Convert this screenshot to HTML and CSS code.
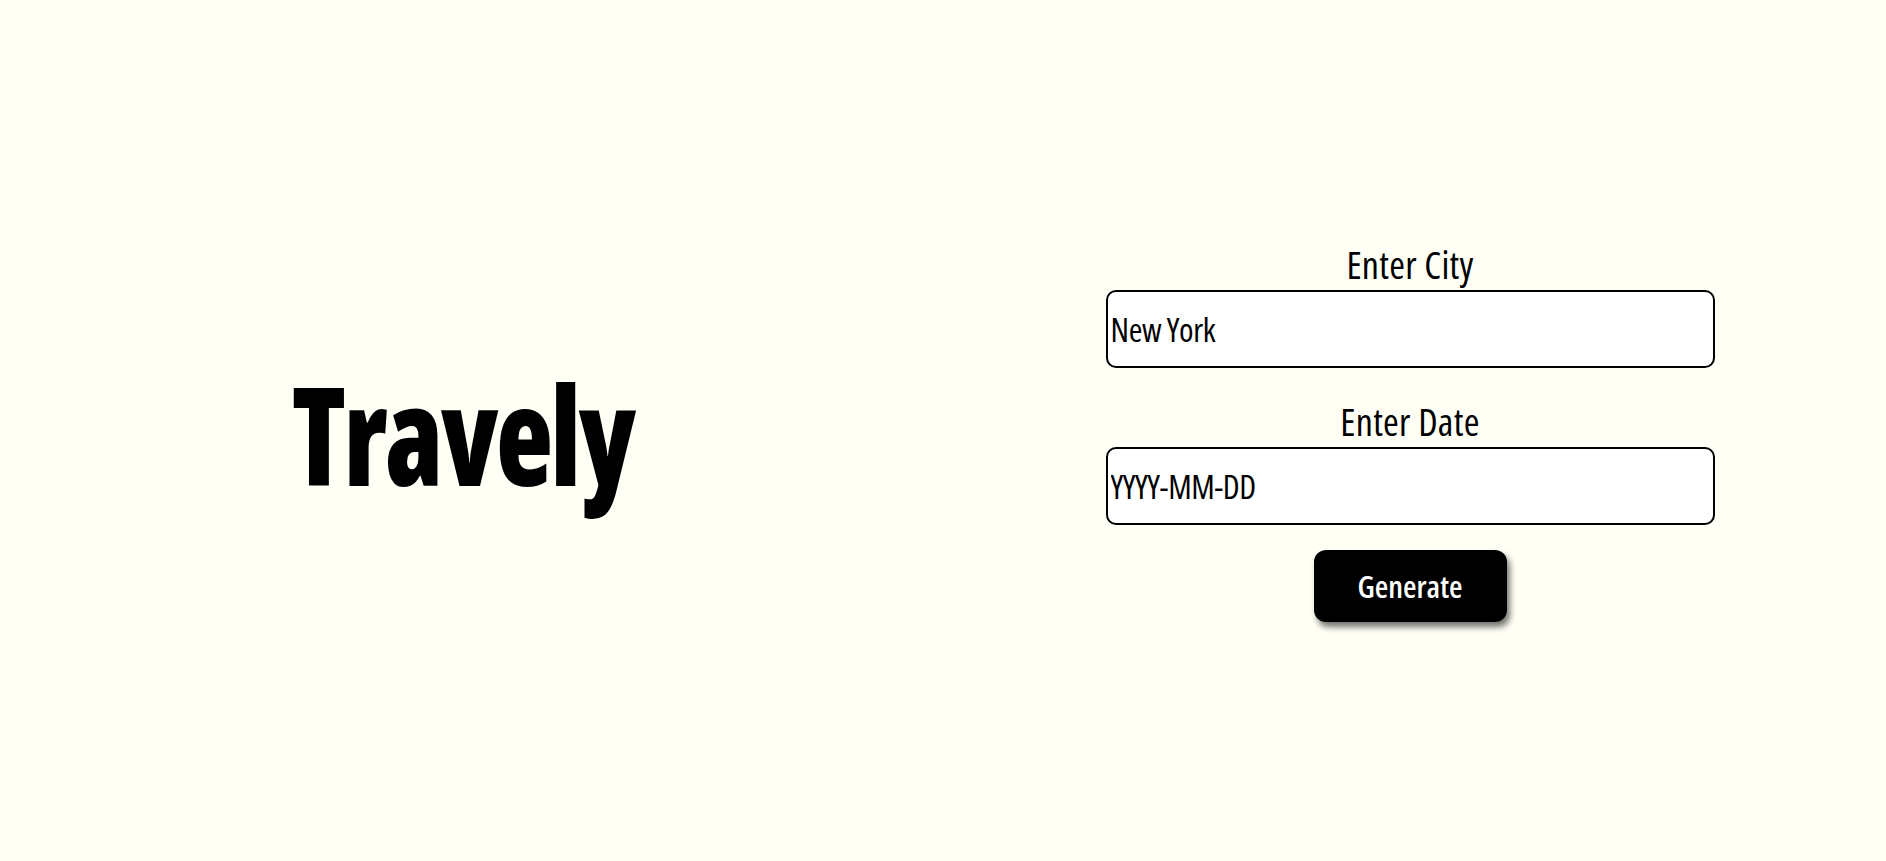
FILE: index.html
```html
<!DOCTYPE html>
<html lang="en">
<head>
<meta charset="utf-8">
<title>Travely</title>
<link rel="stylesheet" href="styles.css">
</head>
<body>
<main class="page">
  <section class="brand">
    <h1 class="title">Travely</h1>
  </section>
  <section class="panel">
    <form class="form">
      <label class="label" for="city">Enter City</label>
      <input class="field" id="city" type="text" value="New York">
      <label class="label label-date" for="date">Enter Date</label>
      <input class="field" id="date" type="text" placeholder="YYYY-MM-DD">
      <button class="btn" type="button">Generate</button>
    </form>
  </section>
</main>
</body>
</html>
```
FILE: styles.css
```css
html, body {
  margin: 0;
  padding: 0;
  height: 100%;
}
body {
  background: #fffff5;
  font-family: "Open Sans", "DejaVu Sans", sans-serif;
  font-stretch: 75%;
  color: #000;
}
.page {
  display: flex;
  height: 100vh;
  padding-right: 6px;
  box-sizing: border-box;
}
.brand, .panel {
  flex: 1;
  display: flex;
  align-items: center;
  justify-content: center;
}
.title {
  margin: 6px 14px 0 0;
  font-size: 137px;
  font-weight: 800;
  line-height: 1;
  letter-spacing: -3px;
  transform: scaleX(0.86);
}
.form {
  display: flex;
  flex-direction: column;
  align-items: center;
  width: 609px;
  margin-top: 6px;
}
.label {
  font-size: 38px;
  line-height: 38px;
  font-weight: 400;
  letter-spacing: 0.3px;
  margin-bottom: 7px;
}
.label-date {
  margin-top: 34px;
}
.field {
  width: 100%;
  height: 78px;
  box-sizing: border-box;
  border: 2px solid #000;
  border-radius: 10px;
  background: #fff;
  padding: 0 3px;
  font-family: inherit;
  font-stretch: 75%;
  font-size: 33px;
  letter-spacing: -0.4px;
  color: #000;
  outline: none;
}
.field::placeholder {
  color: #000;
  opacity: 1;
}
.btn {
  margin-top: 25px;
  width: 193px;
  height: 72px;
  border: none;
  border-radius: 12px;
  background: #000;
  color: #fff;
  font-family: inherit;
  font-stretch: 75%;
  font-size: 31px;
  font-weight: 550;
  box-shadow: 3px 5px 6px rgba(0, 0, 0, 0.55);
  cursor: pointer;
}
```
